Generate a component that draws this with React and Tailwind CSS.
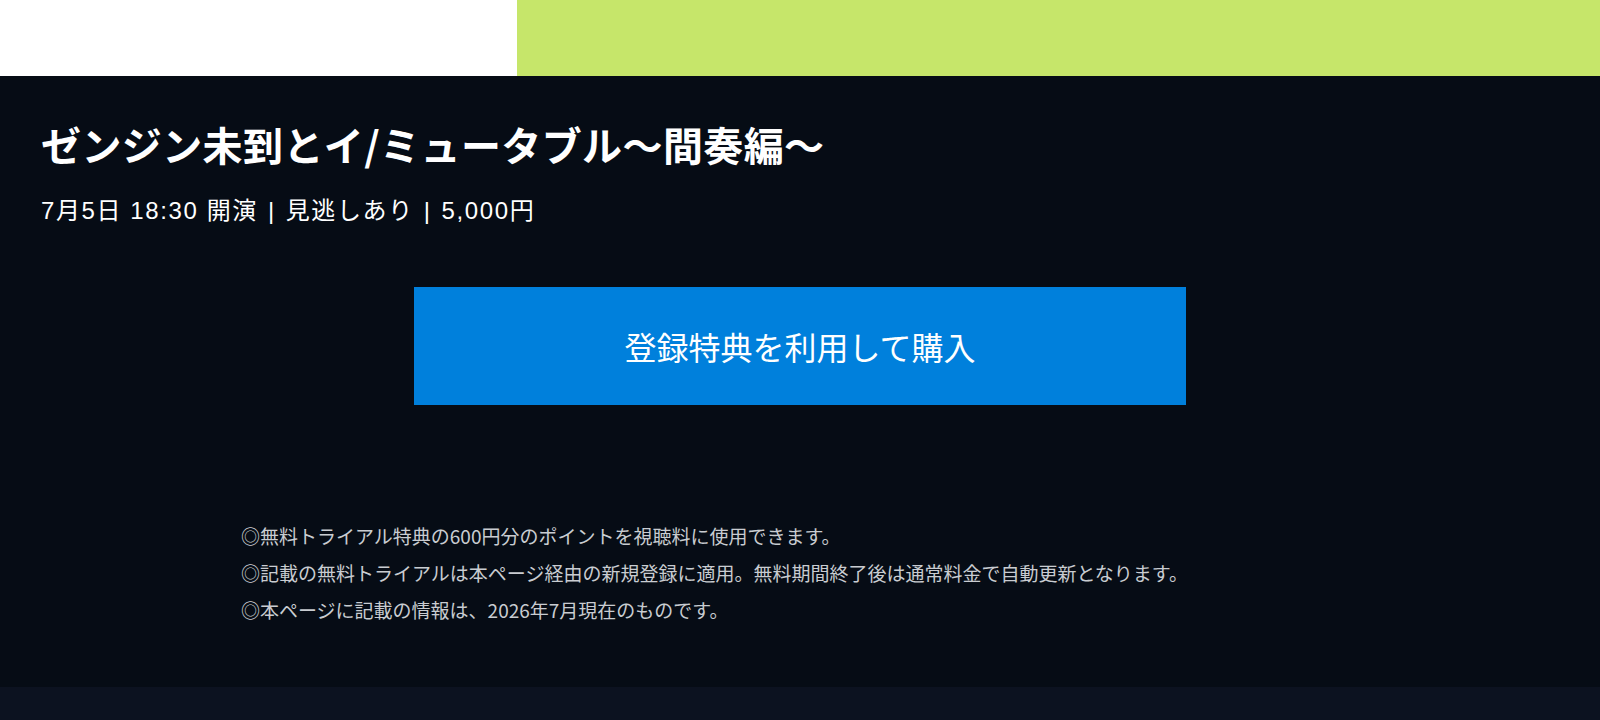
export default function App() {
  const jp = { fontFamily: '"Noto Sans CJK JP", "Noto Sans", sans-serif' };
  const meta = { fontFamily: '"Liberation Sans", "Noto Sans CJK JP", sans-serif' };
  return (
    <div className="w-[1600px] min-h-[720px] bg-[#060c15] flex flex-col" style={jp}>
      {/* top banner strip */}
      <div className="flex h-[76px]">
        <div className="w-[517px] bg-white" />
        <div className="flex-1 bg-[#c6e66a]" />
      </div>

      {/* event block */}
      <section className="h-[611px] px-[41px] pt-[40px]">
        <h1 className="text-[40px] font-bold leading-[56px] text-white tracking-[0.4px]">
          ゼンジン未到とイ/ミュータブル〜間奏編〜
        </h1>
        <p
          className="mt-[24px] text-[24px] leading-[30px] text-white tracking-[1.6px] flex items-center"
          style={meta}
        >
          <span>7月5日 18:30 開演</span>
          <span className="mx-[10px]">|</span>
          <span>見逃しあり</span>
          <span className="mx-[10px]">|</span>
          <span>5,000円</span>
        </p>

        <div className="mt-[61px] flex justify-center">
          <button className="w-[772px] h-[118px] bg-[#0080dc] text-white text-[32px] leading-none">
            登録特典を利用して購入
          </button>
        </div>

        <ul className="mt-[112px] pl-[200px] text-[19px] leading-[37px] text-[#c9ccd1]">
          <li>◎無料トライアル特典の600円分のポイントを視聴料に使用できます。</li>
          <li>◎記載の無料トライアルは本ページ経由の新規登録に適用。無料期間終了後は通常料金で自動更新となります。</li>
          <li>◎本ページに記載の情報は、2026年7月現在のものです。</li>
        </ul>
      </section>

      <footer className="flex-1 bg-[#0c1220] min-h-[33px]" />
    </div>
  );
}
